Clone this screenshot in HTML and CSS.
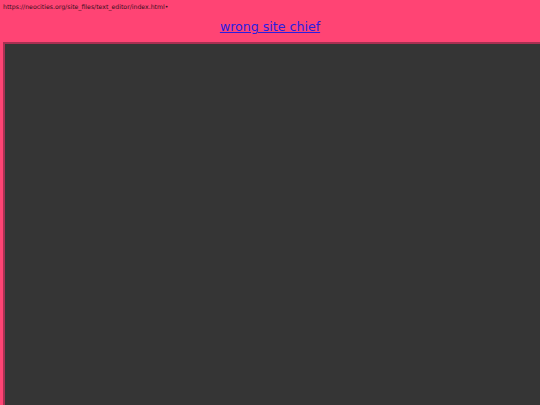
FILE: index.html
```html
<!DOCTYPE html>
<html>
<head>
<meta charset="utf-8">
<link rel="stylesheet" href="styles.css">
</head>
<body>
<div class="url">https://neocities.org/site_files/text_editor/index.html•</div>
<h1 class="title"><a href="#">wrong site chief</a></h1>
<div class="frame"></div>
</body>
</html>
```
FILE: styles.css
```css
html, body {
  margin: 0;
  padding: 0;
  height: 100%;
  overflow: hidden;
}
body {
  background: #ff4474;
  font-family: "DejaVu Sans", sans-serif;
  display: flex;
  flex-direction: column;
}
.url {
  padding: 3px 0 0 3px;
  font-size: 6.2px;
  line-height: 7px;
  color: #3a1020;
}
.title {
  margin: 9px 0 0 0;
  text-align: center;
  font-size: 12.6px;
  line-height: 16px;
  font-weight: normal;
  letter-spacing: 0;
}
.title a {
  color: #2a1ee0;
  text-decoration: underline;
}
.frame {
  flex: 1;
  margin: 7px 0 0 3px;
  background: #353535;
  border-top: 2px solid #a83052;
  border-left: 2px solid #a83052;
}
```
